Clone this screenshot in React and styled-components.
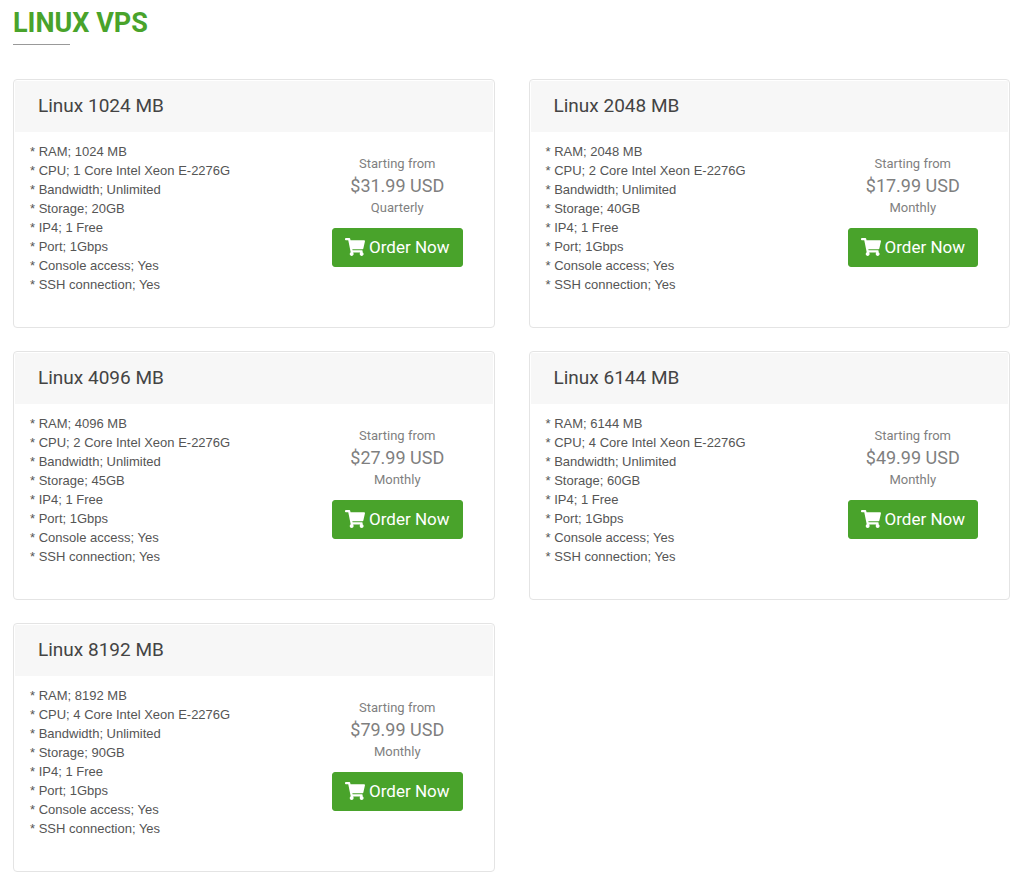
import React from "react";
import styled, { createGlobalStyle } from "styled-components";
import { FaShoppingCart } from "react-icons/fa";

const GlobalStyle = createGlobalStyle`
  *, *::before, *::after { box-sizing: border-box; }
  body {
    margin: 0;
    background: #fff;
    font-family: Roboto, "Liberation Sans", sans-serif;
  }
`;

const Page = styled.main`
  padding: 6px 14px 17px 13px;
`;

const Heading = styled.h1`
  margin: 0;
  font-size: 27px;
  line-height: 34px;
  font-weight: 700;
  color: #49a32b;

  &::after {
    content: "";
    display: block;
    width: 57px;
    height: 1px;
    margin-top: 4px;
    background: #999;
  }
`;

const PlanGrid = styled.div`
  display: grid;
  grid-template-columns: repeat(2, minmax(0, 1fr));
  column-gap: 34px;
  row-gap: 23px;
  margin-top: 34px;
`;

const Card = styled.article`
  min-height: 249px;
  padding: 1px;
  border: 1px solid #e4e4e4;
  border-radius: 4px;
  background: #fff;
`;

const CardTitle = styled.h2`
  margin: 0;
  padding: 0 23px 1px;
  background: #f7f7f7;
  color: #444;
  font-size: 19px;
  line-height: 50px;
  font-weight: 400;
`;

const CardBody = styled.div`
  display: flex;
  justify-content: space-between;
  align-items: flex-start;
  padding: 10px 30px 0 15px;
`;

const Specs = styled.ul`
  margin: 0;
  padding: 0;
  list-style: none;
  color: #555;
  font-family: "Liberation Sans", Arial, sans-serif;
  font-size: 13px;
  line-height: 19px;
`;

const Offer = styled.div`
  display: flex;
  flex-direction: column;
  align-items: center;
  padding-top: 12px;
  color: #7f7f7f;
`;

const Note = styled.span`
  font-size: 13px;
  line-height: 20px;
`;

const Price = styled.span`
  font-size: 18px;
  line-height: 24px;
`;

const OrderButton = styled.button`
  display: flex;
  align-items: center;
  gap: 4px;
  height: 39px;
  margin-top: 10px;
  padding: 0 12px 2px;
  border: 1px solid #49a32b;
  border-radius: 3px;
  background: #49a32b;
  color: #fff;
  font-family: inherit;
  font-size: 17px;
  line-height: 24px;
  cursor: pointer;

  svg {
    width: 20px;
    height: 18px;
  }
`;

const plans = [
  { memory: 1024, cores: 1, storage: 20, price: "31.99", cycle: "Quarterly" },
  { memory: 2048, cores: 2, storage: 40, price: "17.99", cycle: "Monthly" },
  { memory: 4096, cores: 2, storage: 45, price: "27.99", cycle: "Monthly" },
  { memory: 6144, cores: 4, storage: 60, price: "49.99", cycle: "Monthly" },
  { memory: 8192, cores: 4, storage: 90, price: "79.99", cycle: "Monthly" },
];

function Plan({ memory, cores, storage, price, cycle }) {
  const specs = [
    `RAM; ${memory} MB`,
    `CPU; ${cores} Core Intel Xeon E-2276G`,
    "Bandwidth; Unlimited",
    `Storage; ${storage}GB`,
    "IP4; 1 Free",
    "Port; 1Gbps",
    "Console access; Yes",
    "SSH connection; Yes",
  ];
  return (
    <Card>
      <CardTitle>{`Linux ${memory} MB`}</CardTitle>
      <CardBody>
        <Specs>
          {specs.map((spec) => (
            <li key={spec}>{`* ${spec}`}</li>
          ))}
        </Specs>
        <Offer>
          <Note>Starting from</Note>
          <Price>{`$${price} USD`}</Price>
          <Note>{cycle}</Note>
          <OrderButton type="button">
            <FaShoppingCart aria-hidden="true" />
            Order Now
          </OrderButton>
        </Offer>
      </CardBody>
    </Card>
  );
}

export default function App() {
  return (
    <>
      <GlobalStyle />
      <Page>
        <Heading>LINUX VPS</Heading>
        <PlanGrid>
          {plans.map((plan) => (
            <Plan key={plan.memory} {...plan} />
          ))}
        </PlanGrid>
      </Page>
    </>
  );
}
